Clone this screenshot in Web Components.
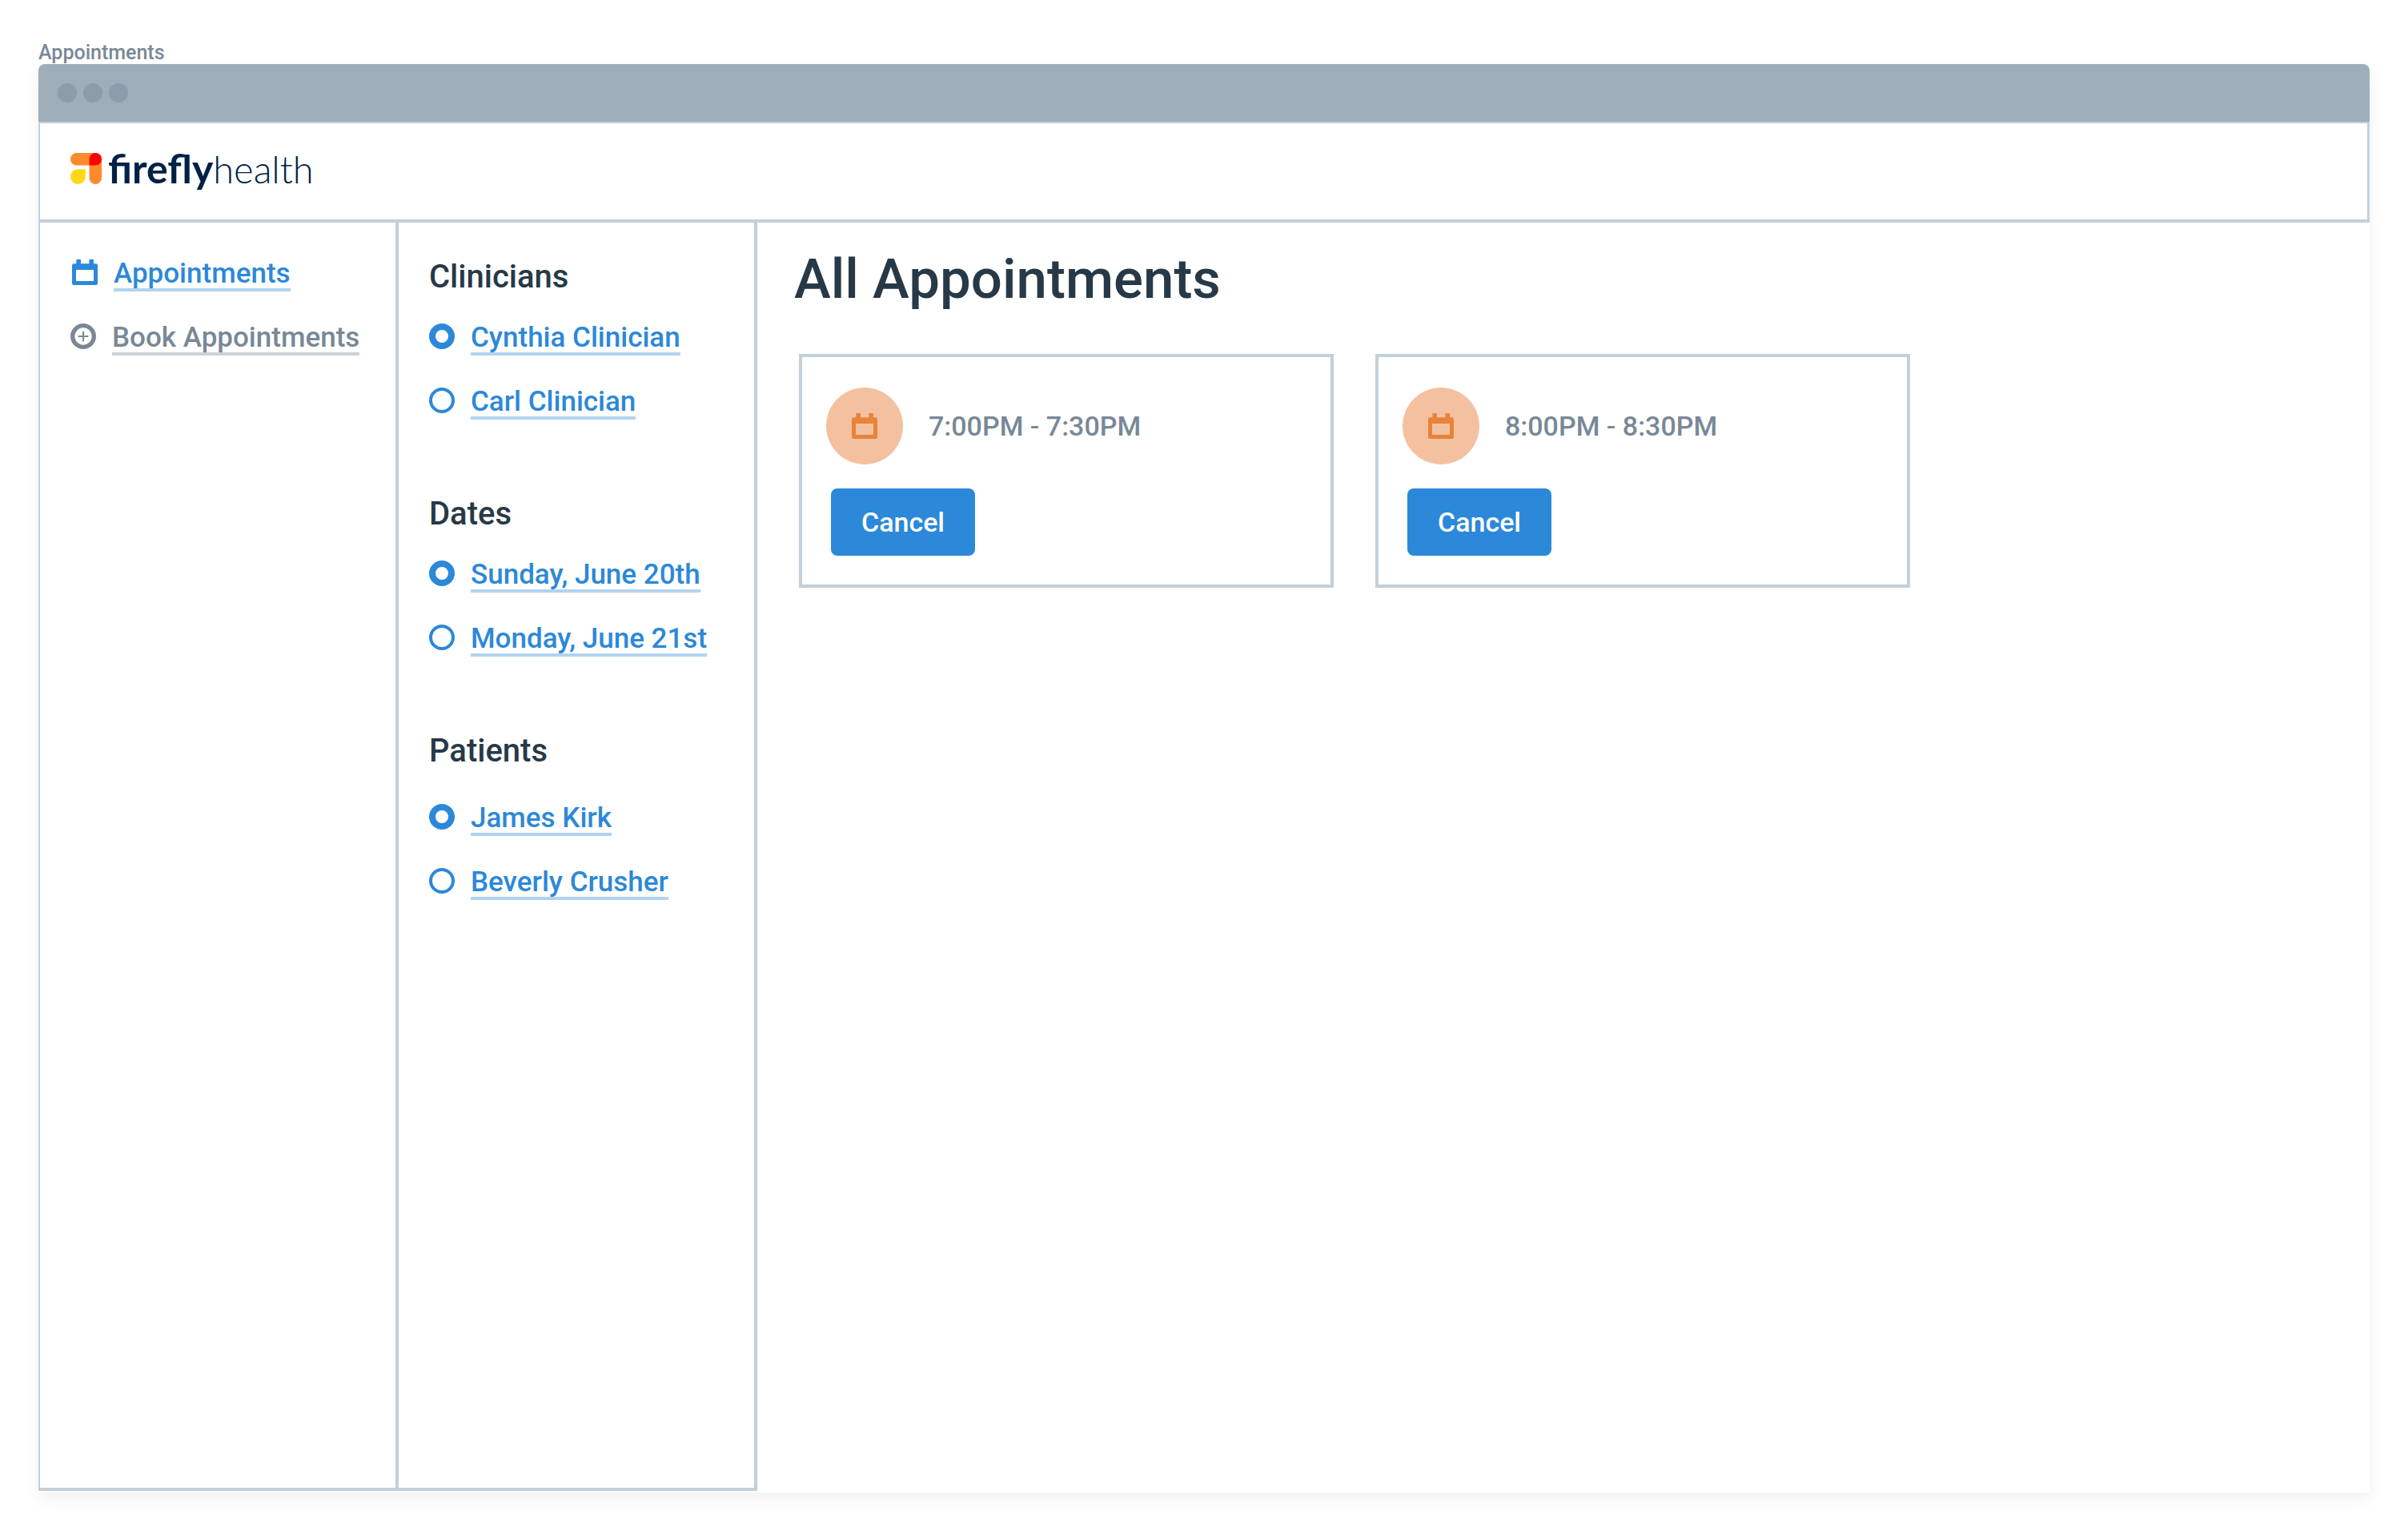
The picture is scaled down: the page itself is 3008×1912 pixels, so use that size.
<!DOCTYPE html>
<html lang="en">
<head>
<meta charset="utf-8">
<title>Appointments</title>
<style>
  :root {
    --ink: #273947;
    --muted: #788896;
    --muted-line: #ccd2d8;
    --line: #c3cfd9;
    --accent: #2c88d9;
    --accent-line: #b1d3f0;
    --bar: #9eadba;
    --bar-dot: #8d9cab;
  }
  body {
    margin: 0;
    background: #fff;
    color: var(--ink);
    font: 500 35px/36px Roboto, "Liberation Sans", sans-serif;
  }
</style>
</head>
<body>

<app-artboard name="Appointments">
  <app-header slot="header"></app-header>

  <app-column slot="nav" lead>
    <nav-link href="#appointments" icon="calendar" active>Appointments</nav-link>
    <nav-link href="#book" icon="plus">Book Appointments</nav-link>
  </app-column>

  <app-column slot="filters">
    <filter-group heading="Clinicians" options="Cynthia Clinician|Carl Clinician"></filter-group>
    <filter-group heading="Dates" options="Sunday, June 20th|Monday, June 21st"></filter-group>
    <filter-group heading="Patients" options="James Kirk|Beverly Crusher" roomy></filter-group>
  </app-column>

  <appointment-list heading="All Appointments">
    <appointment-card>7:00PM - 7:30PM</appointment-card>
    <appointment-card>8:00PM - 8:30PM</appointment-card>
  </appointment-list>
</app-artboard>

<script>
class BaseElement extends HTMLElement {
  connectedCallback() {
    if (this.shadowRoot) return;
    this.attachShadow({ mode: 'open' }).innerHTML =
      `<style>*{box-sizing:border-box}:host{box-sizing:border-box}${this.styles()}</style>${this.markup()}`;
  }
  attr(name) { return this.getAttribute(name) || ''; }
}

const GLYPHS = {
  calendar: `<svg viewBox="0 0 96 96" aria-hidden="true"><path fill="currentColor" fill-rule="evenodd" d="M16 0h17v16h31V0h17v16h8a7 7 0 0 1 7 7v66a7 7 0 0 1-7 7H7a7 7 0 0 1-7-7V23a7 7 0 0 1 7-7h9zM15 39v42h66V39z"/></svg>`,
  plus: `<svg viewBox="0 0 96 96" aria-hidden="true"><circle cx="48" cy="48" r="40" fill="none" stroke="currentColor" stroke-width="16"/><path d="M48 29v38M29 48h38" stroke="currentColor" stroke-width="6"/></svg>`
};

customElements.define('app-icon', class extends BaseElement {
  styles() { return `:host{display:block;width:32px;height:32px;flex:none}svg{display:block;width:100%;height:100%}`; }
  markup() { return GLYPHS[this.attr('name')]; }
});

customElements.define('app-artboard', class extends BaseElement {
  styles() { return `
    :host { display: flex; flex-direction: column; min-height: 100vh; padding: 52px 48px 48px; }
    .caption { font-size: 25px; line-height: 28px; color: var(--muted); }
    .window { flex: 1; display: flex; flex-direction: column; border-radius: 8px 8px 0 0; box-shadow: 0 8px 20px rgba(0,0,0,.06); }
    .bar { display: flex; align-items: center; gap: 8px; height: 72px; padding: 0 24px; background: var(--bar); border-radius: 8px 8px 0 0; }
    .bar i { width: 24px; height: 24px; border-radius: 50%; background: var(--bar-dot); }
    .body { flex: 1; display: grid; grid-template-columns: 450px 448px 1fr; padding-bottom: 2px; }`; }
  markup() { return `
    <div class="caption">${this.attr('name')}</div>
    <div class="window">
      <div class="bar"><i></i><i></i><i></i></div>
      <slot name="header"></slot>
      <div class="body"><slot name="nav"></slot><slot name="filters"></slot><slot></slot></div>
    </div>`; }
});

customElements.define('app-header', class extends BaseElement {
  styles() { return `
    :host { display: flex; align-items: center; height: 126px; padding: 0 38px 8px; border: solid var(--line); border-width: 2px 3px 4px 2px; }
    a { display: flex; align-items: center; gap: 8px; color: #002147; text-decoration: none; }
    svg { width: 39px; height: 39px; }
    span { display: flex; align-items: baseline; font-family: Lato, "Liberation Sans", sans-serif; font-size: 47px; line-height: 60px; font-weight: 300; }
    b { font-size: 50px; font-weight: 700; }`; }
  markup() { return `
    <a href="#home">
      <svg viewBox="0 0 116 116" aria-hidden="true">
        <rect width="116" height="46" rx="23" fill="#ff8a2d"/>
        <rect x="70" width="46" height="116" rx="23" fill="#ff8a2d"/>
        <path d="M70 46V23a23 23 0 1 1 23 23z" fill="#f00"/>
        <path d="M56 60v28a28 28 0 1 1-28-28z" fill="#ffd814"/>
      </svg>
      <span><b>firefly</b>health</span>
    </a>`; }
});

customElements.define('app-column', class extends BaseElement {
  styles() { return `
    :host { display: flex; flex-direction: column; gap: 94px; padding: 44px 0 44px 38px; border: solid var(--line); border-width: 0 4px 4px 0; }
    :host([lead]) { gap: 40px; padding-top: 46px; border-left-width: 2px; }`; }
  markup() { return `<slot></slot>`; }
});

customElements.define('nav-link', class extends BaseElement {
  styles() { return `
    :host { display: block; color: var(--muted); --under: var(--muted-line); }
    :host([active]) { color: var(--accent); --under: var(--accent-line); }
    :host([active]) app-icon { margin-left: 2px; }
    a { display: flex; align-items: flex-start; gap: 20px; color: inherit; text-decoration: none; }
    span { border-bottom: 4px solid var(--under); white-space: nowrap; }`; }
  markup() { return `<a href="${this.attr('href')}"><app-icon name="${this.attr('icon')}"></app-icon><span><slot></slot></span></a>`; }
});

customElements.define('filter-group', class extends BaseElement {
  styles() { return `
    :host { display: block; }
    fieldset { display: flex; flex-direction: column; align-items: flex-start; gap: 40px; margin: 0; padding: 0; border: 0; min-width: 0; }
    legend { padding: 0 0 34px; font-size: 40px; line-height: 48px; }
    :host([roomy]) legend { padding-bottom: 42px; }
    label { display: flex; align-items: flex-start; gap: 20px; color: var(--accent); cursor: pointer; }
    input { appearance: none; flex: none; width: 32px; height: 32px; margin: 0; border: 4px solid var(--accent); border-radius: 50%; }
    input:checked { border-width: 8px; }
    span { border-bottom: 4px solid var(--accent-line); white-space: nowrap; }`; }
  markup() {
    const heading = this.attr('heading');
    return `<fieldset><legend>${heading}</legend>${this.attr('options').split('|').map((text, i) =>
      `<label for="o${i}"><input type="radio" id="o${i}" name="${heading}"${i ? '' : ' checked'}><span>${text}</span></label>`).join('')}</fieldset>`;
  }
});

customElements.define('appointment-list', class extends BaseElement {
  styles() { return `
    :host { display: block; padding: 30px 46px; }
    h1 { margin: 0 0 52px; font-size: 69px; line-height: 82px; font-weight: 500; }
    .cards { display: flex; flex-wrap: wrap; gap: 52px; padding-left: 6px; }`; }
  markup() { return `<h1>${this.attr('heading')}</h1><div class="cards"><slot></slot></div>`; }
});

customElements.define('appointment-card', class extends BaseElement {
  styles() { return `
    :host { display: flex; flex-direction: column; gap: 30px; width: 668px; padding: 38px 30px 36px; border: 4px solid var(--line); }
    .when { display: flex; align-items: center; gap: 32px; font-size: 34px; color: var(--muted); }
    .badge { display: grid; place-items: center; width: 96px; height: 96px; border-radius: 50%; background: #f3c1a0; color: #e8833a; }
    button { align-self: flex-start; width: 180px; height: 84px; margin: 0 6px; padding: 0; border: 0; border-radius: 8px; background: var(--accent); color: #fff; font: inherit; font-size: 34px; cursor: pointer; }`; }
  markup() { return `
    <div class="when"><div class="badge"><app-icon name="calendar"></app-icon></div><slot></slot></div>
    <button type="button">Cancel</button>`; }
});
</script>
</body>
</html>
